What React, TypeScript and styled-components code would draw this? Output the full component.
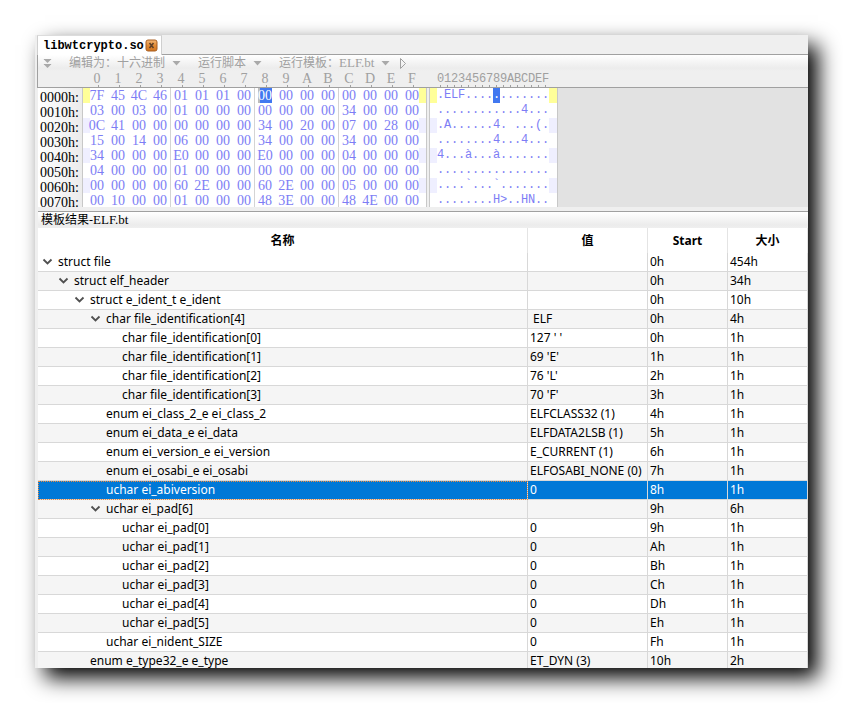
import React from "react";
import styled, { createGlobalStyle, css } from "styled-components";

const serif = `"Liberation Serif", "Noto Sans CJK SC", serif`;
const mono = `"Liberation Mono", "Noto Sans CJK SC", monospace`;
const sans = `"Noto Sans", "Noto Sans CJK SC", sans-serif`;

const GlobalStyle = createGlobalStyle`
  * { box-sizing: border-box; }
  body { margin: 0; background: #fff; color: #000; font-family: ${sans}; font-size: 12px; }
  button { border: 0; padding: 0; margin: 0; background: none; color: inherit; font: inherit; }
  svg { display: block; }
`;

const Desktop = styled.div`
  height: 100vh;
  padding: 35px;
  display: flex;
`;

const Window = styled.main`
  flex: 1;
  min-width: 0;
  display: flex;
  flex-direction: column;
  overflow: hidden;
  padding-left: 2px;
  background: #efefef;
`;

const Shadow = styled.div`
  flex: 1;
  min-width: 0;
  display: flex;
  box-shadow: 10px 10px 20px #000;
`;

const TabBar = styled.div`
  display: flex;
  flex: none;
  height: 20px;
`;

const Tab = styled.div`
  display: flex;
  align-items: center;
  gap: 1px;
  padding: 0 3px 0 5px;
  background: #fff;
  border-left: 1px solid #cfcfcf;
  border-top: 1px solid #dcdcdc;
  border-right: 1px solid #cfcfcf;
  font: bold 12px/18px ${mono};
`;

const TabRest = styled.div`
  flex: 1;
  border-bottom: 1px solid #a0a0a0;
`;

const Toolbar = styled.div`
  display: flex;
  flex: none;
  align-items: center;
  gap: 17px;
  height: 16px;
  padding-left: 5px;
  border-left: 1px solid #a0a0a0;
  background: linear-gradient(#fff, #ececec 13px, #efefef);
  color: #a0a0a0;
  font: 12px/16px ${serif};
`;

const ToolButton = styled.button`
  display: flex;
  align-items: center;
  gap: 7px;
  white-space: nowrap;
`;

const Template = styled.div`
  display: flex;
  align-items: center;
  gap: 9px;
`;

const Latin = styled.span`
  font-size: 13px;
`;

const Ruler = styled.div`
  display: flex;
  flex: none;
  height: 17px;
  padding-left: 52px;
  border-left: 1px solid #a0a0a0;
  border-bottom: 1px solid #a0a0a0;
  color: #a0a0a0;
  font: 14px/16px ${serif};
`;

const byteGrid = css`
  display: grid;
  grid-template-columns: repeat(16, 14px);
  column-gap: 7px;
`;

const charGrid = css`
  display: grid;
  grid-template-columns: repeat(16, 7px);
`;

const ticks = (step: number, at: number) => css`
  background: repeating-linear-gradient(
      90deg,
      transparent 0 ${at}px,
      #a0a0a0 ${at}px ${at + 1}px,
      transparent ${at + 1}px ${step}px
    )
    left bottom / 100% 2px no-repeat;
`;

const RulerBytes = styled.div`
  ${byteGrid}
  ${ticks(21, 8)}
  text-align: center;
`;

const RulerChars = styled.div`
  ${charGrid}
  ${ticks(7, 3)}
  margin-left: 18px;
  justify-items: center;
  font: 12px/16px ${mono};
`;

const HexView = styled.section`
  display: flex;
  flex: none;
  height: 119px;
  margin-left: 1px;
  overflow: hidden;
  background: #e2e2e2;
  font: 14px/15px ${serif};
`;

const Offsets = styled.div`
  width: 45px;
  padding: 2px 0 0 2px;
  border-right: 1px solid #c8c8c8;
  background: linear-gradient(90deg, #fff, #ececec);
`;

const HexPane = styled.div`
  background: #fff;
  color: #7d7df5;
`;

const Splitter = styled.div`
  width: 4px;
  border-left: 1px solid #c8c8c8;
  border-right: 1px solid #c8c8c8;
  background: #efefef;
`;

const CharPane = styled(HexPane)`
  border-right: 1px solid #c8c8c8;
  font: 12px/15px ${mono};
`;

const Line = styled.div<{ $tone: string }>`
  height: 15px;
  padding: 0 7px;
  background: ${(p) => p.$tone};
`;

const CharLine = styled(Line)`
  padding-right: 8px;
`;

const Bytes = styled.div`
  ${byteGrid}
  height: 15px;
  background: repeating-linear-gradient(90deg, #fff 0 80px, #d4d4d4 80px 81px, #fff 81px 84px);
`;

const Chars = styled.div`
  ${charGrid}
  height: 15px;
  background: #fff;
`;

const Cell = styled.span<{ $selected?: boolean; $caret?: boolean }>`
  display: flex;
  justify-content: center;
  height: 15px;
  ${(p) =>
    p.$selected &&
    css`
      background: #4178f0;
      color: #fff;
    `}
  ${(p) => p.$caret && "box-shadow: inset 2px 0 #bcbcbc;"}
`;

const PanelTitle = styled.h2`
  flex: none;
  height: 17px;
  margin: 4px 0 0 1px;
  padding-left: 3px;
  border-top: 1px solid #a0a0a0;
  background: linear-gradient(#fff, #ececec 13px, #efefef);
  font: 12px/15px ${serif};
`;

const Results = styled.div`
  flex: 1;
  min-height: 0;
  margin-left: 1px;
  overflow: hidden;
  background: #fff;
`;

const Table = styled.table`
  width: 100%;
  table-layout: fixed;
  border-collapse: separate;
  border-spacing: 0;
`;

const Head = styled.th<{ $width?: number }>`
  ${(p) => p.$width && `width: ${p.$width}px;`}
  height: 25px;
  padding: 0;
  border-right: 1px solid #e4e4e4;
  font: bold 12px/24px ${sans};
`;

const Row = styled.tr<{ $selected: boolean }>`
  height: 19px;
  &:nth-child(even) { background: #f5f5f5; }
  ${(p) => p.$selected && "&& { background: #0078d7; color: #fff; }"}
`;

const Data = styled.td`
  height: 19px;
  padding: 0 0 0 2px;
  border-right: 1px solid #d8d8d8;
  border-bottom: 1px solid #d8d8d8;
  line-height: 18px;
  white-space: pre;
`;

const NameData = styled(Data)<{ $level: number; $focus: boolean }>`
  padding-left: ${(p) => 4 + p.$level * 16}px;
  ${(p) => p.$focus && "outline: 1px dotted #f08a3c; outline-offset: -1px;"}
`;

const Name = styled.div`
  display: flex;
  align-items: center;
  height: 18px;
`;

const Twisty = styled.span`
  width: 16px;
  height: 18px;
  flex: none;
  display: flex;
  align-items: center;
`;

const Toggle = styled.button`
  display: block;
`;

const DropArrow = () => (
  <svg width="9" height="5" viewBox="0 0 9 5" aria-hidden="true">
    <path d="M0.5 0h8L4.5 4.5z" fill="#a9a9a9" />
  </svg>
);

const CloseIcon = () => (
  <svg width="13" height="13" viewBox="0 0 13 13" aria-hidden="true">
    <defs>
      <linearGradient id="closeFill" x1="0" y1="0" x2="0" y2="1">
        <stop offset="0" stopColor="#f3b877" />
        <stop offset="0.5" stopColor="#e08a35" />
        <stop offset="1" stopColor="#cf7420" />
      </linearGradient>
    </defs>
    <rect x="1" y="1" width="11" height="11" rx="2" fill="url(#closeFill)" stroke="#a85f22" />
    <path d="M4.5 4l4 5M8.5 4l-4 5" stroke="#5f4028" strokeWidth="1.6" />
  </svg>
);

const ExpandIcon = () => (
  <svg width="9" height="11" viewBox="0 0 9 11" aria-hidden="true">
    <path d="M0.5 1h8L4.5 5zM0.5 6h8L4.5 10z" fill="#a9a9a9" />
    <path d="M1 1.5h7M1 6.5h7" stroke="#a9a9a9" />
  </svg>
);

const RunIcon = () => (
  <svg width="8" height="11" viewBox="0 0 8 11" aria-hidden="true">
    <path d="M1.5 0.5v10L6.5 5.5z" fill="none" stroke="#a0a0a0" />
  </svg>
);

const Chevron = () => (
  <svg width="11" height="8" viewBox="0 0 11 8" aria-hidden="true">
    <path d="M1.5 1.5l4 4 4-4" fill="none" stroke="#505050" strokeWidth="1.8" />
  </svg>
);

const dump = [
  "7F 45 4C 46 01 01 01 00 00 00 00 00 00 00 00 00",
  "03 00 03 00 01 00 00 00 00 00 00 00 34 00 00 00",
  "0C 41 00 00 00 00 00 00 34 00 20 00 07 00 28 00",
  "15 00 14 00 06 00 00 00 34 00 00 00 34 00 00 00",
  "34 00 00 00 E0 00 00 00 E0 00 00 00 04 00 00 00",
  "04 00 00 00 01 00 00 00 00 00 00 00 00 00 00 00",
  "00 00 00 00 60 2E 00 00 60 2E 00 00 05 00 00 00",
  "00 10 00 00 01 00 00 00 48 3E 00 00 48 4E 00 00",
].map((line) => line.split(" "));

const digits = "0123456789ABCDEF".split("");

const toChar = (byte: string) => {
  const code = parseInt(byte, 16);
  return code < 32 || code === 127 ? "." : String.fromCharCode(code);
};

const tone = (row: number) => (row === 0 ? "#ffff99" : row % 2 === 0 ? "#efefff" : "#fff");
const isSelected = (row: number, col: number) => row === 0 && col === 8;

type Entry = { level: number; name: string; value: string; start: string; size: string; open?: boolean; selected?: boolean };

const entries: Entry[] = [
  { level: 0, name: "struct file", value: "", start: "0h", size: "454h", open: true },
  { level: 1, name: "struct elf_header", value: "", start: "0h", size: "34h", open: true },
  { level: 2, name: "struct e_ident_t e_ident", value: "", start: "0h", size: "10h", open: true },
  { level: 3, name: "char file_identification[4]", value: " ELF", start: "0h", size: "4h", open: true },
  { level: 4, name: "char file_identification[0]", value: "127 ' '", start: "0h", size: "1h" },
  { level: 4, name: "char file_identification[1]", value: "69 'E'", start: "1h", size: "1h" },
  { level: 4, name: "char file_identification[2]", value: "76 'L'", start: "2h", size: "1h" },
  { level: 4, name: "char file_identification[3]", value: "70 'F'", start: "3h", size: "1h" },
  { level: 3, name: "enum ei_class_2_e ei_class_2", value: "ELFCLASS32 (1)", start: "4h", size: "1h" },
  { level: 3, name: "enum ei_data_e ei_data", value: "ELFDATA2LSB (1)", start: "5h", size: "1h" },
  { level: 3, name: "enum ei_version_e ei_version", value: "E_CURRENT (1)", start: "6h", size: "1h" },
  { level: 3, name: "enum ei_osabi_e ei_osabi", value: "ELFOSABI_NONE (0)", start: "7h", size: "1h" },
  { level: 3, name: "uchar ei_abiversion", value: "0", start: "8h", size: "1h", selected: true },
  { level: 3, name: "uchar ei_pad[6]", value: "", start: "9h", size: "6h", open: true },
  { level: 4, name: "uchar ei_pad[0]", value: "0", start: "9h", size: "1h" },
  { level: 4, name: "uchar ei_pad[1]", value: "0", start: "Ah", size: "1h" },
  { level: 4, name: "uchar ei_pad[2]", value: "0", start: "Bh", size: "1h" },
  { level: 4, name: "uchar ei_pad[3]", value: "0", start: "Ch", size: "1h" },
  { level: 4, name: "uchar ei_pad[4]", value: "0", start: "Dh", size: "1h" },
  { level: 4, name: "uchar ei_pad[5]", value: "0", start: "Eh", size: "1h" },
  { level: 3, name: "uchar ei_nident_SIZE", value: "0", start: "Fh", size: "1h" },
  { level: 2, name: "enum e_type32_e e_type", value: "ET_DYN (3)", start: "10h", size: "2h" },
];

export default function App() {
  return (
    <>
      <GlobalStyle />
      <Desktop>
        <Shadow>
          <Window>
            <TabBar>
              <Tab>
                libwtcrypto.so
                <button aria-label="Close"><CloseIcon /></button>
              </Tab>
              <TabRest />
            </TabBar>
            <Toolbar>
              <ToolButton aria-label="Expand"><ExpandIcon /></ToolButton>
              <ToolButton>编辑为：十六进制<DropArrow /></ToolButton>
              <ToolButton>运行脚本<DropArrow /></ToolButton>
              <Template>
                <ToolButton><span>运行模板：<Latin>ELF.bt</Latin></span><DropArrow /></ToolButton>
                <ToolButton aria-label="Run"><RunIcon /></ToolButton>
              </Template>
            </Toolbar>
            <Ruler>
              <RulerBytes>{digits.map((d) => <span key={d}>{d}</span>)}</RulerBytes>
              <RulerChars>{digits.map((d) => <span key={d}>{d}</span>)}</RulerChars>
            </Ruler>
            <HexView>
              <Offsets>
                {dump.map((_, r) => <div key={r}>{`00${r}0h:`}</div>)}
              </Offsets>
              <HexPane>
                {dump.map((line, r) => (
                  <Line key={r} $tone={tone(r)}>
                    <Bytes>
                      {line.map((byte, c) => (
                        <Cell key={c} $selected={isSelected(r, c)} $caret={isSelected(r, c)}>{byte}</Cell>
                      ))}
                    </Bytes>
                  </Line>
                ))}
              </HexPane>
              <Splitter />
              <CharPane>
                {dump.map((line, r) => (
                  <CharLine key={r} $tone={tone(r)}>
                    <Chars>
                      {line.map((byte, c) => (
                        <Cell key={c} $selected={isSelected(r, c)}>{toChar(byte)}</Cell>
                      ))}
                    </Chars>
                  </CharLine>
                ))}
              </CharPane>
            </HexView>
            <PanelTitle>模板结果-<Latin>ELF.bt</Latin></PanelTitle>
            <Results>
              <Table>
                <thead>
                  <tr>
                    <Head>名称</Head>
                    <Head $width={120}>值</Head>
                    <Head $width={80}>Start</Head>
                    <Head $width={80}>大小</Head>
                  </tr>
                </thead>
                <tbody>
                  {entries.map((e) => (
                    <Row key={e.name} $selected={!!e.selected}>
                      <NameData $level={e.level} $focus={!!e.selected}>
                        <Name>
                          <Twisty>
                            {e.open && <Toggle aria-label={`Collapse ${e.name}`}><Chevron /></Toggle>}
                          </Twisty>
                          {e.name}
                        </Name>
                      </NameData>
                      <Data>{e.value}</Data>
                      <Data>{e.start}</Data>
                      <Data>{e.size}</Data>
                    </Row>
                  ))}
                </tbody>
              </Table>
            </Results>
          </Window>
        </Shadow>
      </Desktop>
    </>
  );
}
